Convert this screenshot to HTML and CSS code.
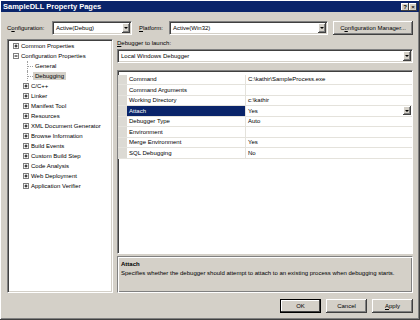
FILE: index.html
```html
<!DOCTYPE html>
<html>
<head lang="en">
    <meta charset="UTF-8">
    <title>SampleDLL Property Pages</title>
    <link rel="stylesheet" href="styles.css">
</head>
<body>
<div id="dialog">
    <div id="caption">
        <span class="title">SampleDLL Property Pages</span>
        <span class="capbtn">?</span>
        <span class="capbtn">×</span>
    </div>
    <div id="config">
        <span class="cfg-label">C<u>o</u>nfiguration:</span>
        <div class="combo cfg"><span class="txt">Active(Debug)</span><em class="drop"></em></div>
        <span class="plat-label"><u>P</u>latform:</span>
        <div class="combo plat"><span class="txt">Active(Win32)</span><em class="drop"></em></div>
        <div class="btn mgr">C<u>o</u>nfiguration Manager...</div>
    </div>
    <div id="main">
        <div id="tree">
            <div class="node"><svg class="exp" width="6" height="6"><rect x=".5" y=".5" width="5" height="5" fill="#fff" stroke="#808080"/><path d="M1.5 3h3M3 1.5v3" stroke="#000"/></svg>Common Properties</div>
            <div class="node"><svg class="exp" width="6" height="6"><rect x=".5" y=".5" width="5" height="5" fill="#fff" stroke="#808080"/><path d="M1.5 3h3" stroke="#000"/></svg>Configuration Properties</div>
            <div class="node child"><i class="line"></i>General</div>
            <div class="node child"><i class="line"></i><span class="sel">Debugging</span></div>
            <div class="node child"><svg class="exp" width="6" height="6"><rect x=".5" y=".5" width="5" height="5" fill="#fff" stroke="#808080"/><path d="M1.5 3h3M3 1.5v3" stroke="#000"/></svg>C/C++</div>
            <div class="node child"><svg class="exp" width="6" height="6"><rect x=".5" y=".5" width="5" height="5" fill="#fff" stroke="#808080"/><path d="M1.5 3h3M3 1.5v3" stroke="#000"/></svg>Linker</div>
            <div class="node child"><svg class="exp" width="6" height="6"><rect x=".5" y=".5" width="5" height="5" fill="#fff" stroke="#808080"/><path d="M1.5 3h3M3 1.5v3" stroke="#000"/></svg>Manifest Tool</div>
            <div class="node child"><svg class="exp" width="6" height="6"><rect x=".5" y=".5" width="5" height="5" fill="#fff" stroke="#808080"/><path d="M1.5 3h3M3 1.5v3" stroke="#000"/></svg>Resources</div>
            <div class="node child"><svg class="exp" width="6" height="6"><rect x=".5" y=".5" width="5" height="5" fill="#fff" stroke="#808080"/><path d="M1.5 3h3M3 1.5v3" stroke="#000"/></svg>XML Document Generator</div>
            <div class="node child"><svg class="exp" width="6" height="6"><rect x=".5" y=".5" width="5" height="5" fill="#fff" stroke="#808080"/><path d="M1.5 3h3M3 1.5v3" stroke="#000"/></svg>Browse Information</div>
            <div class="node child"><svg class="exp" width="6" height="6"><rect x=".5" y=".5" width="5" height="5" fill="#fff" stroke="#808080"/><path d="M1.5 3h3M3 1.5v3" stroke="#000"/></svg>Build Events</div>
            <div class="node child"><svg class="exp" width="6" height="6"><rect x=".5" y=".5" width="5" height="5" fill="#fff" stroke="#808080"/><path d="M1.5 3h3M3 1.5v3" stroke="#000"/></svg>Custom Build Step</div>
            <div class="node child"><svg class="exp" width="6" height="6"><rect x=".5" y=".5" width="5" height="5" fill="#fff" stroke="#808080"/><path d="M1.5 3h3M3 1.5v3" stroke="#000"/></svg>Code Analysis</div>
            <div class="node child"><svg class="exp" width="6" height="6"><rect x=".5" y=".5" width="5" height="5" fill="#fff" stroke="#808080"/><path d="M1.5 3h3M3 1.5v3" stroke="#000"/></svg>Web Deployment</div>
            <div class="node child"><svg class="exp" width="6" height="6"><rect x=".5" y=".5" width="5" height="5" fill="#fff" stroke="#808080"/><path d="M1.5 3h3M3 1.5v3" stroke="#000"/></svg>Application Verifier</div>
        </div>
        <div id="pane">
            <div class="launch-label"><u>D</u>ebugger to launch:</div>
            <div class="combo launch"><span class="txt">Local Windows Debugger</span><em class="drop"></em></div>
            <div id="grid">
                <div class="row"><span class="gut"></span><span class="name">Command</span><span class="val">C:\kathir\SampleProcess.exe</span></div>
                <div class="row"><span class="gut"></span><span class="name">Command Arguments</span><span class="val"></span></div>
                <div class="row"><span class="gut"></span><span class="name">Working Directory</span><span class="val">c:\kathir</span></div>
                <div class="row active"><span class="gut"></span><span class="name">Attach</span><span class="val">Yes<em class="drop"></em></span></div>
                <div class="row"><span class="gut"></span><span class="name">Debugger Type</span><span class="val">Auto</span></div>
                <div class="row"><span class="gut"></span><span class="name">Environment</span><span class="val"></span></div>
                <div class="row"><span class="gut"></span><span class="name">Merge Environment</span><span class="val">Yes</span></div>
                <div class="row"><span class="gut"></span><span class="name">SQL Debugging</span><span class="val">No</span></div>
            </div>
            <div id="desc">
                <b>Attach</b>
                <p>Specifies whether the debugger should attempt to attach to an existing process when debugging starts.</p>
            </div>
        </div>
    </div>
    <div id="buttons">
        <div class="btn def">OK</div>
        <div class="btn">Cancel</div>
        <div class="btn"><u>A</u>pply</div>
    </div>
</div>
</body>
</html>
```

FILE: styles.css
```css
*{
    margin: 0;
    padding: 0;
    box-sizing: border-box;
}
body{
    width: 420px;
    height: 320px;
    overflow: hidden;
    background: #d4d0c8;
    font-family: "Liberation Sans", Arial, sans-serif;
    font-size: 6px;
    color: #000;
}
u{
    text-decoration: underline;
}
#dialog{
    width: 420px;
    height: 320px;
    padding: 1px 1px 2px 1px;
    display: flex;
    flex-direction: column;
    box-shadow: inset -1px -1px #404040, inset 1px 1px #ffffff, inset -2px -2px #808080;
}
#caption{
    height: 11px;
    background: #0a246a;
    display: flex;
    align-items: center;
    padding: 0 2px 0 2px;
}
.title{
    flex: 1;
    color: #fff;
    font-weight: bold;
    font-size: 7.5px;
}
.capbtn{
    width: 8px;
    height: 8px;
    background: #d4d0c8;
    font-size: 6px;
    font-weight: bold;
    line-height: 8px;
    text-align: center;
    box-shadow: inset -1px -1px #404040, inset 1px 1px #ffffff;
}
#config{
    display: flex;
    align-items: center;
    height: 14px;
    margin: 9px 6px 0 6px;
}
.cfg-label{
    width: 45px;
}
.plat-label{
    width: 30px;
    margin-left: 7px;
}
.combo{
    height: 14px;
    background: #fff;
    display: flex;
    align-items: center;
    padding: 0 1px 0 3px;
    border: 1px solid;
    border-color: #808080 #ffffff #ffffff #808080;
    box-shadow: inset 1px 1px #404040, inset -1px -1px #d4d0c8;
}
.combo .txt{
    flex: 1;
}
.cfg{
    width: 80px;
}
.plat{
    width: 159px;
}
.launch{
    width: 296px;
    margin-top: 2px;
}
.drop{
    width: 8px;
    height: 10px;
    background: #d4d0c8;
    display: flex;
    align-items: center;
    justify-content: center;
    box-shadow: inset -1px -1px #404040, inset 1px 1px #ffffff, inset -2px -2px #808080;
}
.drop::after{
    content: "";
    border-left: 2px solid transparent;
    border-right: 2px solid transparent;
    border-top: 2px solid #000;
}
.btn{
    height: 14px;
    width: 41px;
    background: #d4d0c8;
    display: flex;
    align-items: center;
    justify-content: center;
    box-shadow: inset -1px -1px #404040, inset 1px 1px #ffffff, inset -2px -2px #808080;
}
.mgr{
    width: 80px;
    margin-left: auto;
}
.def{
    box-shadow: inset 0 0 0 1px #000, inset -2px -2px #404040, inset 2px 2px #ffffff;
}
#main{
    display: flex;
    gap: 4px;
    height: 254px;
    margin: 4px 6px 0 6px;
}
#tree{
    width: 106px;
    background: #fff;
    padding: 1px 0 0 5px;
    border: 1px solid;
    border-color: #808080 #ffffff #ffffff #808080;
    box-shadow: inset 1px 1px #404040, inset -1px -1px #d4d0c8;
}
.node{
    height: 10px;
    display: flex;
    align-items: center;
    white-space: nowrap;
}
.exp{
    margin-right: 2px;
    flex: none;
}
.child{
    padding-left: 10px;
}
.line{
    width: 6px;
    height: 10px;
    margin: 0 2px 0 4px;
    border-left: 1px dotted #a0a0a0;
    display: flex;
    align-items: center;
}
.line::after{
    content: "";
    width: 5px;
    border-top: 1px dotted #a0a0a0;
}
.sel{
    background: #d4d0c8;
    padding: 1px 2px;
    margin-left: -2px;
}
#pane{
    width: 296px;
    display: flex;
    flex-direction: column;
}
.launch-label{
    height: 8px;
    line-height: 8px;
}
#grid{
    height: 184px;
    margin-top: 7px;
    background: #fff;
    padding-top: 3.5px;
    border: 1px solid;
    border-color: #808080 #ffffff #ffffff #808080;
    box-shadow: inset 1px 1px #404040;
}
.row{
    height: 10.5px;
    display: flex;
    border-bottom: 1px solid #e4e2dc;
}
.gut{
    width: 9px;
    background: #dcdad4;
}
.name{
    width: 119px;
    padding-left: 2px;
    border-right: 1px solid #e4e2dc;
    display: flex;
    align-items: center;
}
.val{
    flex: 1;
    padding: 0 1px 0 2px;
    display: flex;
    align-items: center;
    justify-content: space-between;
}
.active .name{
    background: #0a246a;
    color: #fff;
}
.active .drop{
    height: 9px;
}
#desc{
    height: 37px;
    margin-top: 2px;
    padding: 3px 3px;
    border: 1px solid;
    border-color: #808080 #ffffff #ffffff #808080;
    box-shadow: inset 1px 1px #ffffff, inset -1px -1px #808080;
}
#desc b{
    display: block;
    line-height: 9px;
}
#desc p{
    line-height: 9px;
}
#buttons{
    display: flex;
    justify-content: flex-end;
    gap: 5px;
    margin: 6px 6px 0 6px;
}
```
